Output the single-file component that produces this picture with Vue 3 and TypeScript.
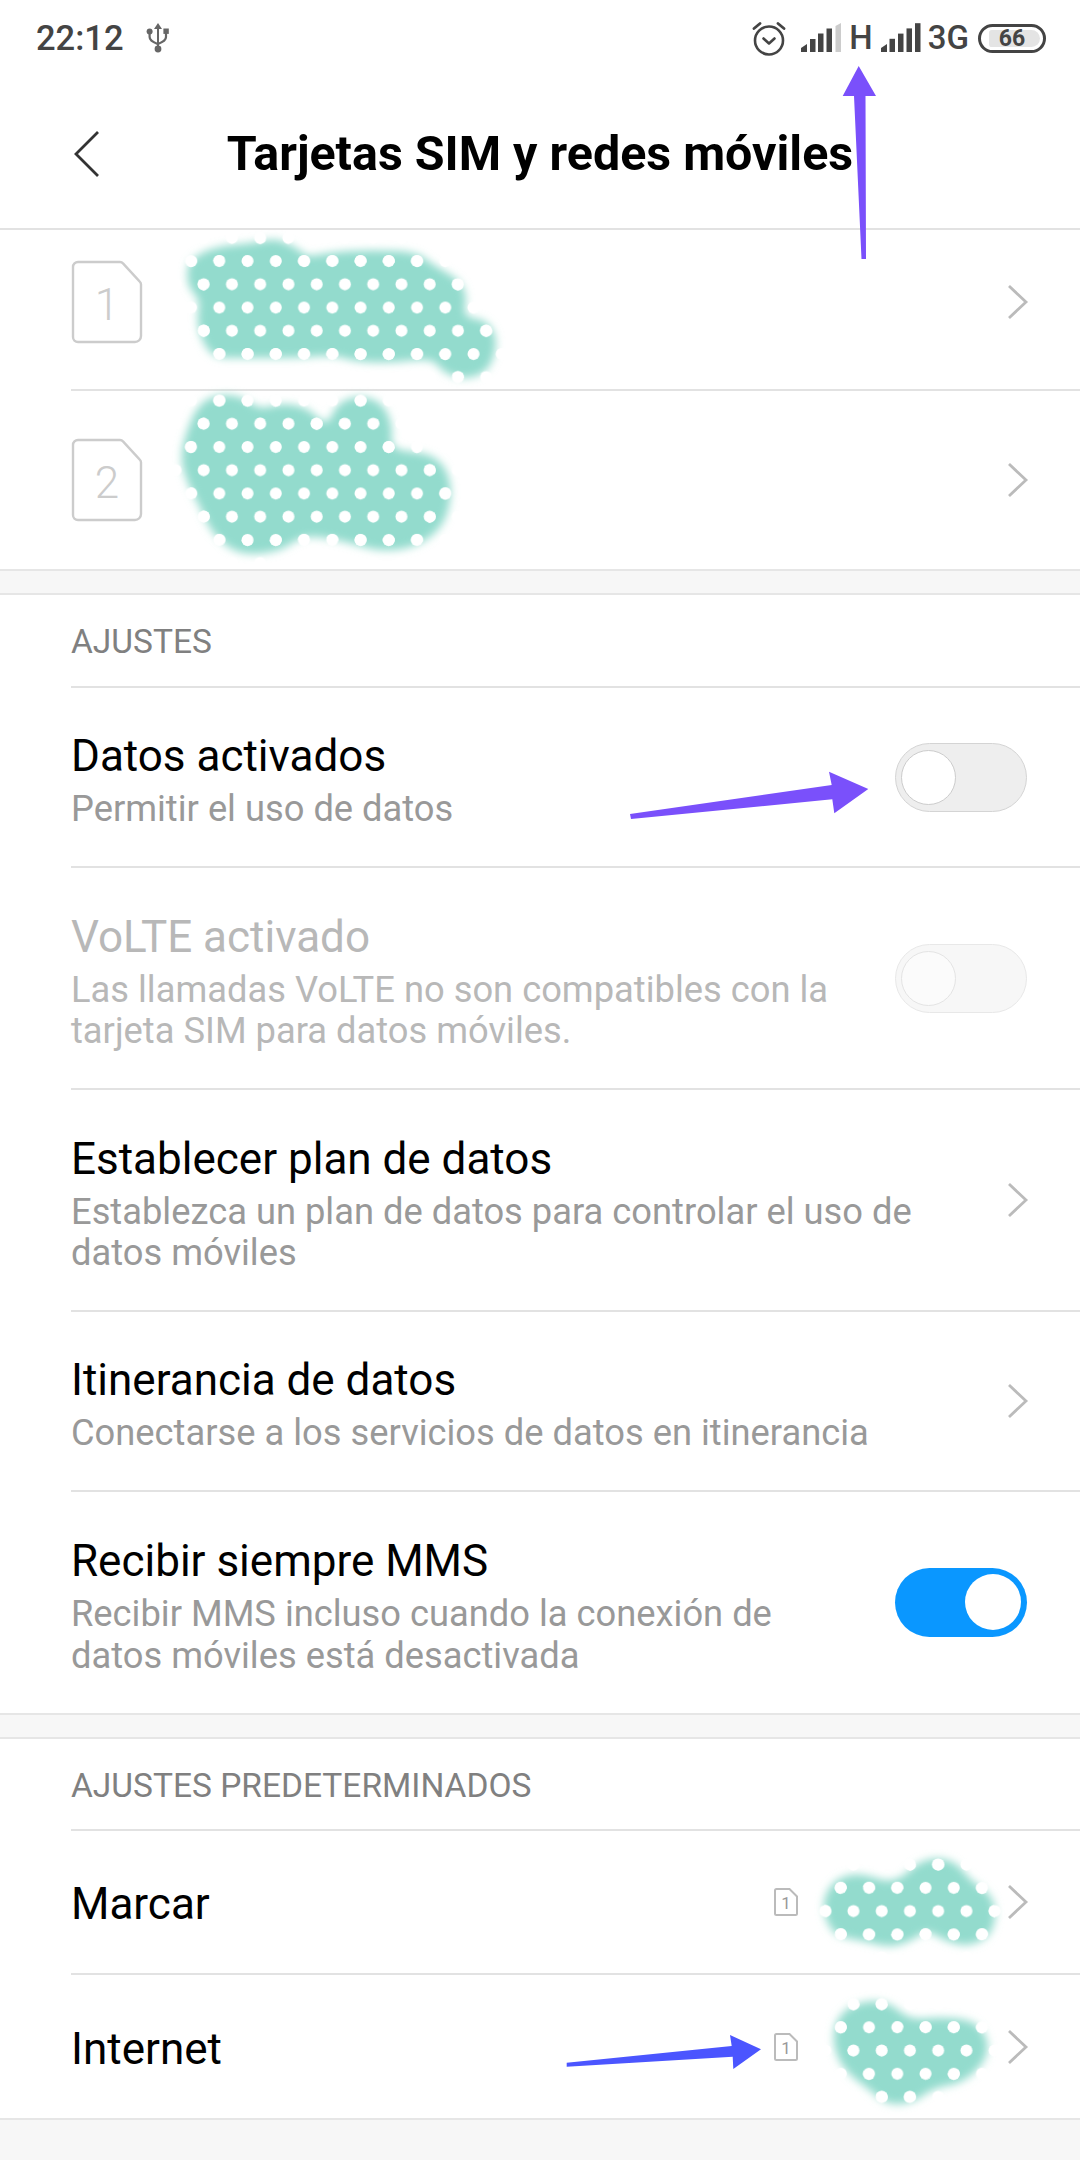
<script setup lang="ts">
type Point = [number, number];

interface SettingRow {
  title: string;
  desc: string[];
  tall?: boolean;
  toggle?: 'off' | 'on' | 'disabled';
  disabled?: boolean;
}

const settings: SettingRow[] = [
  { title: 'Datos activados', desc: ['Permitir el uso de datos'], toggle: 'off' },
  {
    title: 'VoLTE activado',
    desc: ['Las llamadas VoLTE no son compatibles con la', 'tarjeta SIM para datos móviles.'],
    toggle: 'disabled',
    disabled: true,
    tall: true,
  },
  {
    title: 'Establecer plan de datos',
    desc: ['Establezca un plan de datos para controlar el uso de', 'datos móviles'],
    tall: true,
  },
  { title: 'Itinerancia de datos', desc: ['Conectarse a los servicios de datos en itinerancia'] },
  {
    title: 'Recibir siempre MMS',
    desc: ['Recibir MMS incluso cuando la conexión de', 'datos móviles está desactivada'],
    toggle: 'on',
    tall: true,
  },
];

// smooth closed outline through the given points
function blobPath(points: Point[]): string {
  const mid = (a: Point, b: Point): Point => [(a[0] + b[0]) / 2, (a[1] + b[1]) / 2];
  const start = mid(points[points.length - 1], points[0]);
  let d = `M${start[0]} ${start[1]}`;
  points.forEach((p, i) => {
    const m = mid(p, points[(i + 1) % points.length]);
    d += ` Q${p[0]} ${p[1]} ${m[0]} ${m[1]}`;
  });
  return d + ' Z';
}

const blobs: string[] = ([
  [[190,260],[213,247],[253,243],[277,238],[300,250],[307,257],[333,252],[373,250],[417,252],[433,265],[460,280],[467,297],[463,317],[487,320],[498,340],[490,370],[467,380],[443,373],[433,358],[393,363],[357,362],[333,355],[297,358],[240,358],[213,358],[200,337],[197,317],[200,300],[188,287],[187,270]],
  [[197,407],[213,395],[240,395],[260,410],[280,403],[307,407],[327,427],[337,403],[360,395],[383,403],[393,427],[390,450],[430,453],[448,470],[452,497],[443,527],[417,547],[380,552],[340,540],[303,535],[283,550],[253,555],[230,550],[210,530],[200,507],[187,483],[180,457],[187,430]],
  [[823,1897],[837,1878],[860,1873],[887,1882],[903,1877],[917,1863],[937,1857],[957,1863],[970,1880],[990,1893],[997,1913],[990,1937],[967,1947],[943,1940],[927,1930],[913,1940],[890,1948],[860,1940],[837,1937],[825,1920]],
  [[833,2030],[843,2010],[867,2000],[890,2003],[910,2020],[940,2017],[973,2020],[988,2037],[987,2060],[963,2083],[933,2088],[913,2103],[887,2105],[870,2090],[847,2073],[835,2053]],
] as Point[][]).map(blobPath);

const signalBars = [0, 1, 2, 3, 4];
</script>

<template>
  <div class="page">
    <div class="status-bar">
      <div class="status-left">
        <span class="time">22:12</span>
        <svg class="usb" width="24" height="32" viewBox="0 0 24 32">
          <path d="M12 1l4 6h-3v19h-2V7H8z" fill="#666" />
          <circle cx="12" cy="27" r="3.4" fill="#666" />
          <circle cx="3.6" cy="9.5" r="3" fill="#666" />
          <rect x="17.4" y="6.5" width="5.4" height="5.4" fill="#666" />
          <path d="M3.6 11v4c0 3 2 4.5 8 7M20 11v4c0 3-2 4.5-8 7" fill="none" stroke="#666" stroke-width="2.2" />
        </svg>
      </div>
      <div class="status-right">
        <svg class="alarm" width="36" height="36" viewBox="0 0 36 36">
          <circle cx="18" cy="20.5" r="14" fill="none" stroke="#444" stroke-width="2.6" />
          <path d="M3 8.5L9 3.5M33 8.5L27 3.5" stroke="#444" stroke-width="2.8" stroke-linecap="round" />
          <path d="M12.5 18.5l5.5 5 5.5-5" fill="none" stroke="#444" stroke-width="2.6" stroke-linecap="round" stroke-linejoin="round" />
        </svg>
        <svg class="signal" width="41" height="29" viewBox="0 0 41 29">
          <path d="M0 29v-4l6-4v8z" fill="#444" />
          <rect x="9" y="16" width="5.5" height="13" fill="#444" />
          <rect x="17" y="10.5" width="5.5" height="18.5" fill="#444" />
          <rect x="25.5" y="5.5" width="5.5" height="23.5" fill="#444" />
          <path d="M34.5 3l5.5-3v29h-5.5z" fill="#ccc" />
        </svg>
        <span class="net net-h">H</span>
        <svg class="signal" width="40" height="29" viewBox="0 0 40 29">
          <path d="M0 29v-4l6-4v8z" fill="#444" />
          <rect v-for="i in signalBars.slice(1)" :key="i" :x="i * 8.5" :y="21 - i * 5.2" width="5.5" :height="8 + i * 5.2" fill="#444" />
        </svg>
        <span class="net net-3g">3G</span>
        <div class="battery">
          <div class="battery-fill"></div>
          <span class="battery-level">66</span>
        </div>
      </div>
    </div>

    <header class="title-bar">
      <svg class="back" width="28" height="48" viewBox="0 0 28 48">
        <path d="M25 2L3 24l22 22" fill="none" stroke="#333" stroke-width="2.8" />
      </svg>
      <h1>Tarjetas SIM y redes móviles</h1>
    </header>

    <section class="group group-sims">
      <div class="sim-row sim-row-first">
        <div class="sim-icon">
          <svg width="72" height="84" viewBox="0 0 72 84">
            <path d="M7 2h42a4 4 0 0 1 3 1.400l16.500 18a4 4 0 0 1 1.500 3V76a6 6 0 0 1-6 6H7a5 5 0 0 1-5-5V7a5 5 0 0 1 5-5z" fill="none" stroke="#ccc" stroke-width="2.400" />
          </svg>
          <span>1</span>
        </div>
        <svg class="chevron" width="22" height="36" viewBox="0 0 22 36">
          <path d="M2 2l17 16L2 34" fill="none" stroke="#bbb" stroke-width="2.8" />
        </svg>
      </div>
      <div class="sim-row sim-row-second">
        <div class="sim-icon">
          <svg width="72" height="84" viewBox="0 0 72 84">
            <path d="M7 2h42a4 4 0 0 1 3 1.400l16.500 18a4 4 0 0 1 1.500 3V76a6 6 0 0 1-6 6H7a5 5 0 0 1-5-5V7a5 5 0 0 1 5-5z" fill="none" stroke="#ccc" stroke-width="2.400" />
          </svg>
          <span>2</span>
        </div>
        <svg class="chevron" width="22" height="36" viewBox="0 0 22 36">
          <path d="M2 2l17 16L2 34" fill="none" stroke="#bbb" stroke-width="2.8" />
        </svg>
      </div>
    </section>

    <section class="group group-settings">
      <div class="group-label">AJUSTES</div>
      <div
        v-for="row in settings"
        :key="row.title"
        class="setting"
        :class="{ 'setting-tall': row.tall, 'is-disabled': row.disabled }"
      >
        <div class="setting-text">
          <div class="setting-title">{{ row.title }}</div>
          <div v-for="line in row.desc" :key="line" class="setting-desc">{{ line }}</div>
        </div>
        <div v-if="row.toggle" class="toggle" :class="`toggle-${row.toggle}`"><div class="knob"></div></div>
        <svg v-else class="chevron" width="22" height="36" viewBox="0 0 22 36">
          <path d="M2 2l17 16L2 34" fill="none" stroke="#bbb" stroke-width="2.8" />
        </svg>
      </div>
    </section>

    <section class="group group-defaults">
      <div class="group-label">AJUSTES PREDETERMINADOS</div>
      <div v-for="name in ['Marcar', 'Internet']" :key="name" class="default-row">
        <div class="setting-title">{{ name }}</div>
        <div class="default-value">
          <div class="sim-mini">
            <svg width="24" height="28" viewBox="0 0 24 28">
              <path d="M2.500 1h13L23 8.500v17a1.500 1.500 0 0 1-1.500 1.500h-19A1.500 1.500 0 0 1 1 25.500v-23A1.500 1.500 0 0 1 2.500 1z" fill="none" stroke="#bbb" stroke-width="2" />
            </svg>
            <span>1</span>
          </div>
        </div>
        <svg class="chevron" width="22" height="36" viewBox="0 0 22 36">
          <path d="M2 2l17 16L2 34" fill="none" stroke="#bbb" stroke-width="2.8" />
        </svg>
      </div>
    </section>

    <svg class="overlay" width="1080" height="2160" viewBox="0 0 1080 2160">
      <defs>
        <filter id="soft" x="-10%" y="-10%" width="120%" height="120%">
          <feGaussianBlur stdDeviation="4.500" />
        </filter>
        <pattern id="dots" width="28.25" height="46.48" patternUnits="userSpaceOnUse" patternTransform="translate(197.2 277.8)">
          <circle cx="6.5" cy="6.5" r="6" fill="#fff" />
          <circle cx="22.1" cy="29.74" r="6" fill="#fff" />
        </pattern>
      </defs>
      <g v-for="(d, i) in blobs" :key="i">
        <path :d="d" fill="#93dbcd" filter="url(#soft)" />
        <path :d="d" fill="url(#dots)" stroke="url(#dots)" stroke-width="24" />
      </g>
      <polygon points="858.7,66 876,96 865.500,96 866,259 861.500,259 854,96 842.700,96" fill="#7a50fb" />
      <polygon points="630,814 831.700,785 829,771.700 868.300,789 834.300,813.300 832.300,799.300 631,819" fill="#7a50fb" />
      <polygon points="566.700,2062.700 731.700,2046 730,2035 761,2049.300 733.300,2069 732.700,2056.700 566.700,2066.700" fill="#4b55ff" />
    </svg>
  </div>
</template>

<style scoped>
.page {
  position: relative;
  width: 1080px;
  height: 2160px;
  overflow: hidden;
  background: #f7f7f7;
  font-family: Roboto, "Liberation Sans", sans-serif;
}

.status-bar {
  height: 76px;
  padding: 0 34px 0 36px;
  box-sizing: border-box;
  display: flex;
  align-items: center;
  justify-content: space-between;
  background: #fff;
  color: #444;
}

.status-left {
  display: flex;
  align-items: center;
  gap: 22px;
}

.time {
  font-size: 34.500px;
  font-weight: 500;
  line-height: 40px;
}

.status-right {
  display: flex;
  align-items: center;
}

.alarm {
  margin-right: 14px;
}

.signal {
  margin-top: -2px;
}

.net {
  font-size: 33px;
  font-weight: 500;
  line-height: 40px;
}

.net-h {
  margin: 0 8px 0 7px;
}

.net-3g {
  margin: 0 9px 0 7px;
}

.battery {
  position: relative;
  width: 68px;
  height: 29px;
  box-sizing: border-box;
  border: 3px solid #444;
  border-radius: 15px;
  display: flex;
  align-items: center;
  justify-content: center;
  overflow: hidden;
}

.battery-fill {
  position: absolute;
  left: 8px;
  right: 3px;
  top: 3px;
  bottom: 3px;
  border-radius: 3px 9px 9px 3px;
  background: #e4e4e4;
}

.battery-level {
  position: relative;
  font-size: 23px;
  font-weight: 700;
  line-height: 23px;
}

.title-bar {
  position: relative;
  height: 154px;
  padding-top: 2px;
  box-sizing: border-box;
  display: flex;
  align-items: center;
  justify-content: center;
  background: #fff;
  border-bottom: 2px solid #e2e2e2;
}

.title-bar h1 {
  margin: 0;
  font-size: 48.400px;
  font-weight: 700;
  color: #000;
}

.back {
  position: absolute;
  left: 73px;
  top: 54px;
}

.group {
  background: #fff;
  border-bottom: 2px solid #e6e6e6;
}

.group-sims {
  margin-bottom: 22px;
}

.group-sims + .group {
  border-top: 2px solid #e6e6e6;
}

.group-defaults {
  margin-top: 22px;
  border-top: 2px solid #e6e6e6;
}

.sim-row {
  margin-left: 71px;
  padding-right: 51px;
  box-sizing: border-box;
  display: flex;
  align-items: center;
  justify-content: space-between;
}

.sim-row-first {
  height: 161px;
  padding-bottom: 16px;
  border-bottom: 2px solid #e2e2e2;
}

.sim-row-second {
  height: 178px;
}

.sim-icon {
  position: relative;
  width: 72px;
  height: 84px;
  display: flex;
  align-items: center;
  justify-content: center;
  color: #ccc;
  font-size: 44px;
  font-weight: 300;
}

.sim-icon svg {
  position: absolute;
  inset: 0;
}

.sim-icon span {
  margin-top: 6px;
}

.group-label {
  margin-left: 71px;
  height: 92px;
  box-sizing: border-box;
  padding-top: 27px;
  font-size: 33.500px;
  line-height: 40px;
  color: #808080;
  border-bottom: 2px solid #e2e2e2;
}

.group-settings .group-label {
  height: 93px;
}

.setting {
  height: 180px;
  margin-left: 71px;
  padding-right: 51px;
  box-sizing: border-box;
  display: flex;
  align-items: center;
  justify-content: space-between;
  border-bottom: 2px solid #e2e2e2;
}

.setting-tall {
  height: 222px;
}

.setting:last-child {
  height: 221px;
  border-bottom: none;
}

.setting-text {
  padding-top: 6px;
}

.setting-title {
  font-size: 44px;
  line-height: 52px;
  color: #000;
}

.setting-desc {
  font-size: 36.300px;
  line-height: 41.500px;
  color: #999;
}

.setting-text .setting-title {
  margin-bottom: 6px;
}

.is-disabled .setting-title,
.is-disabled .setting-desc {
  color: #b8b8b8;
}

.toggle {
  flex: none;
  position: relative;
  width: 132px;
  height: 69px;
  margin-right: 2px;
  box-sizing: border-box;
  border-radius: 35px;
  border: 1px solid #d4d4d4;
  background: #eee;
}

.knob {
  position: absolute;
  left: 5px;
  top: 6px;
  width: 55px;
  height: 55px;
  box-sizing: border-box;
  border-radius: 50%;
  border: 1px solid #ccc;
  background: #fff;
}

.toggle-disabled {
  border-color: #e8e8e8;
  background: #f7f7f7;
}

.toggle-disabled .knob {
  border-color: #e4e4e4;
  background: #fbfbfb;
}

.toggle-on {
  border: none;
  background: #0a97ff;
}

.toggle-on .knob {
  left: 70px;
  top: 6px;
  width: 56px;
  height: 56px;
  border: none;
}

.chevron {
  flex: none;
}

.default-row {
  height: 144px;
  margin-left: 71px;
  padding-right: 51px;
  box-sizing: border-box;
  display: flex;
  align-items: center;
  border-bottom: 2px solid #e2e2e2;
}

.default-row:last-child {
  height: 143px;
  border-bottom: none;
}

.default-row .setting-title {
  padding-top: 4px;
}

.default-value {
  margin-left: auto;
  margin-right: 209px;
}

.sim-mini {
  position: relative;
  width: 24px;
  height: 28px;
  display: flex;
  align-items: center;
  justify-content: center;
  font-size: 17px;
  color: #999;
}

.sim-mini svg {
  position: absolute;
  inset: 0;
}

.sim-mini span {
  margin-top: 2px;
}

.overlay {
  position: absolute;
  left: 0;
  top: 0;
  pointer-events: none;
}
</style>

<style>
html,
body {
  background: #f7f7f7;
}
</style>
